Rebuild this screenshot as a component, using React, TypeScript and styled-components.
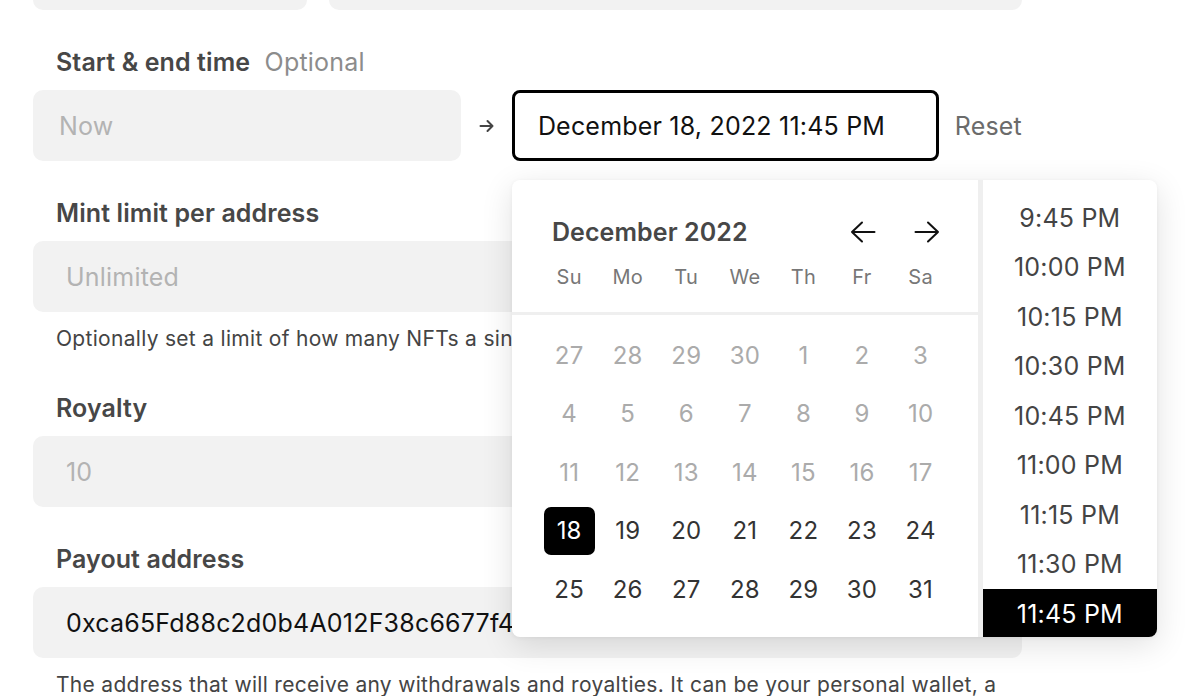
import React from "react"
import styled, { createGlobalStyle } from "styled-components"

const GlobalStyle = createGlobalStyle`
  html, body {
    margin: 0;
    padding: 0;
    background: #ffffff;
    overflow: hidden;
  }
  body {
    font-family: Inter, "Noto Sans", "Liberation Sans", sans-serif;
    color: #111;
  }
`

const colors = {
  label: "#474747",
  muted: "#8c8c8c",
  field: "#f2f2f2",
  placeholder: "#b3b3b3",
  helper: "#444444",
  line: "#efefef",
}

type DayType = {
  n: number
  disabled?: boolean
  selected?: boolean
}

const weekdays = ["Su", "Mo", "Tu", "We", "Th", "Fr", "Sa"]

const days: DayType[] = [
  ...[27, 28, 29, 30].map((n) => ({ n, disabled: true })),
  ...Array.from({ length: 17 }, (_, i) => ({ n: i + 1, disabled: true })),
  ...Array.from({ length: 14 }, (_, i) => ({ n: i + 18, selected: i === 0 })),
]

const times = [
  "9:45 PM",
  "10:00 PM",
  "10:15 PM",
  "10:30 PM",
  "10:45 PM",
  "11:00 PM",
  "11:15 PM",
  "11:30 PM",
  "11:45 PM",
]

function SmallArrow() {
  return (
    <svg width="16" height="14" viewBox="0 0 16 14" fill="none">
      <path
        d="M1.5 7h12M8.5 2l5 5-5 5"
        stroke="#444"
        strokeWidth="2"
        strokeLinecap="round"
        strokeLinejoin="round"
      />
    </svg>
  )
}

function NavArrow({ dir }: { dir: "left" | "right" }) {
  return (
    <svg
      width="26"
      height="22"
      viewBox="0 0 26 22"
      fill="none"
      style={{ transform: dir === "left" ? "scaleX(-1)" : undefined }}
    >
      <path
        d="M1.5 11h22.5M14 1.5l10 9.5-10 9.5"
        stroke="#111"
        strokeWidth="2"
        strokeLinecap="round"
        strokeLinejoin="round"
      />
    </svg>
  )
}

export default function App() {
  return (
    <>
      <GlobalStyle />
      <Form>
        <TopRow>
          <Field />
          <Field />
        </TopRow>

        <Section>
          <Label>
            Start &amp; end time <span>Optional</span>
          </Label>
          <TimeRow>
            <Field $w="428px">
              <Placeholder $pad="26px">Now</Placeholder>
            </Field>
            <ArrowBox>
              <SmallArrow />
            </ArrowBox>
            <PickerWrap>
              <ActiveField>December 18, 2022 11:45 PM</ActiveField>
              <Popup>
                <Calendar>
                  <CalHeader>
                    <MonthRow>
                      <MonthTitle>December 2022</MonthTitle>
                      <NavButtons>
                        <NavArrow dir="left" />
                        <NavArrow dir="right" />
                      </NavButtons>
                    </MonthRow>
                    <Grid>
                      {weekdays.map((d) => (
                        <Weekday key={d}>{d}</Weekday>
                      ))}
                    </Grid>
                  </CalHeader>
                  <DaysGrid>
                    {days.map((d, i) => (
                      <DayCell key={i}>
                        <Day $disabled={d.disabled} $selected={d.selected}>
                          {d.n}
                        </Day>
                      </DayCell>
                    ))}
                  </DaysGrid>
                </Calendar>
                <TimeList>
                  {times.map((t, i) => (
                    <TimeItem key={t} $selected={i === times.length - 1}>
                      {t}
                    </TimeItem>
                  ))}
                </TimeList>
              </Popup>
            </PickerWrap>
            <Reset>Reset</Reset>
          </TimeRow>
        </Section>

        <Section>
          <Label>Mint limit per address</Label>
          <Field>
            <Placeholder>Unlimited</Placeholder>
          </Field>
          <Helper $nowrap>
            Optionally set a limit of how many NFTs a single address can mint.
          </Helper>
        </Section>

        <Section $after>
          <Label>Royalty</Label>
          <Field>
            <Placeholder>10</Placeholder>
          </Field>
        </Section>

        <Section>
          <Label>Payout address</Label>
          <Field>
            <Value>0xca65Fd88c2d0b4A012F38c6677f4aF8c3B2e1d90</Value>
          </Field>
          <Helper>
            The address that will receive any withdrawals and royalties. It can
            be your personal wallet, a multisig wallet, or a split contract.
          </Helper>
        </Section>
      </Form>
    </>
  )
}

const Form = styled.div`
  width: 989px;
  padding-left: 33px;
  display: flex;
  flex-direction: column;
`

const TopRow = styled.div`
  display: grid;
  grid-template-columns: 274px 1fr;
  gap: 22px;
  margin-top: -61px;
`

const Section = styled.div<{ $after?: boolean }>`
  margin-top: ${({ $after }) => ($after ? "42px" : "37px")};
  display: flex;
  flex-direction: column;
`

const Label = styled.div`
  font-size: 25px;
  line-height: 30px;
  font-weight: 600;
  color: ${colors.label};
  padding-left: 23px;
  margin-bottom: 13px;
  letter-spacing: 0.1px;

  span {
    font-weight: 400;
    color: ${colors.muted};
    margin-left: 8px;
    letter-spacing: 0.2px;
  }
`

const Field = styled.div<{ $w?: string }>`
  width: ${({ $w }) => $w || "auto"};
  height: 71px;
  border-radius: 10px;
  background: ${colors.field};
  display: flex;
  align-items: center;
  box-sizing: border-box;
  overflow: hidden;
  flex-shrink: 0;
`

const Placeholder = styled.span<{ $pad?: string }>`
  padding-left: ${({ $pad }) => $pad || "33px"};
  font-size: 25px;
  letter-spacing: 0.2px;
  color: ${colors.placeholder};
`

const Value = styled.span`
  padding-left: 33px;
  font-size: 25px;
  letter-spacing: 0.2px;
  color: #111;
  white-space: nowrap;
`

const Helper = styled.p<{ $nowrap?: boolean }>`
  margin: 15px 0 0;
  padding-left: 23px;
  font-size: 21px;
  line-height: 24px;
  letter-spacing: 0.3px;
  color: ${colors.helper};
  white-space: ${({ $nowrap }) => ($nowrap ? "nowrap" : "normal")};
`

const TimeRow = styled.div`
  display: flex;
  align-items: center;
`

const ArrowBox = styled.div`
  width: 51px;
  display: flex;
  justify-content: center;
  padding-left: 2px;
  box-sizing: border-box;
`

const PickerWrap = styled.div`
  position: relative;
  width: 428px;
`

const ActiveField = styled.div`
  height: 71px;
  box-sizing: border-box;
  border: 3px solid #000;
  border-radius: 8px;
  display: flex;
  align-items: center;
  padding-left: 23px;
  font-size: 25px;
  letter-spacing: 0.2px;
  color: #111;
  white-space: nowrap;
`

const Reset = styled.div`
  margin-left: 16px;
  font-size: 25px;
  letter-spacing: 0.2px;
  color: #6b6b6b;
`

const Popup = styled.div`
  position: absolute;
  top: 90px;
  left: 0;
  z-index: 10;
  display: flex;
  height: 457px;
  background: #fff;
  border-radius: 8px;
  box-shadow: 0 8px 32px rgba(0, 0, 0, 0.12), 0 1px 4px rgba(0, 0, 0, 0.05);
`

const Calendar = styled.div`
  width: 466px;
  border-right: 5px solid ${colors.line};
  display: flex;
  flex-direction: column;
`

const CalHeader = styled.div`
  padding: 37px 28px 20px;
  border-bottom: 3px solid ${colors.line};
`

const MonthRow = styled.div`
  display: flex;
  align-items: center;
  justify-content: space-between;
  height: 30px;
  padding: 0 10px 0 12px;
  margin-bottom: 15px;
`

const MonthTitle = styled.div`
  font-size: 25px;
  font-weight: 600;
  color: ${colors.label};
  letter-spacing: 0.1px;
`

const NavButtons = styled.div`
  display: flex;
  gap: 38px;
  align-items: center;
`

const Grid = styled.div`
  display: grid;
  grid-template-columns: repeat(7, 1fr);
`

const Weekday = styled.div`
  text-align: center;
  font-size: 20px;
  line-height: 30px;
  letter-spacing: 0.3px;
  color: #777;
`

const DaysGrid = styled(Grid)`
  padding: 11px 28px 0;
  grid-auto-rows: 58.5px;
`

const DayCell = styled.div`
  display: flex;
  align-items: center;
  justify-content: center;
`

const Day = styled.div<{ $disabled?: boolean; $selected?: boolean }>`
  width: 51px;
  height: 48px;
  border-radius: 7px;
  display: flex;
  align-items: center;
  justify-content: center;
  font-size: 24px;
  letter-spacing: 0.2px;
  background: ${({ $selected }) => ($selected ? "#000" : "transparent")};
  color: ${({ $disabled, $selected }) =>
    $selected ? "#fff" : $disabled ? "#ababab" : "#333"};
`

const TimeList = styled.div`
  width: 174px;
  padding-top: 13px;
  box-sizing: border-box;
  overflow: hidden;
  border-radius: 0 8px 8px 0;
`

const TimeItem = styled.div<{ $selected?: boolean }>`
  height: 49.5px;
  display: flex;
  align-items: center;
  justify-content: center;
  font-size: 25px;
  letter-spacing: 0.2px;
  background: ${({ $selected }) => ($selected ? "#000" : "transparent")};
  color: ${({ $selected }) => ($selected ? "#fff" : "#444")};
`
